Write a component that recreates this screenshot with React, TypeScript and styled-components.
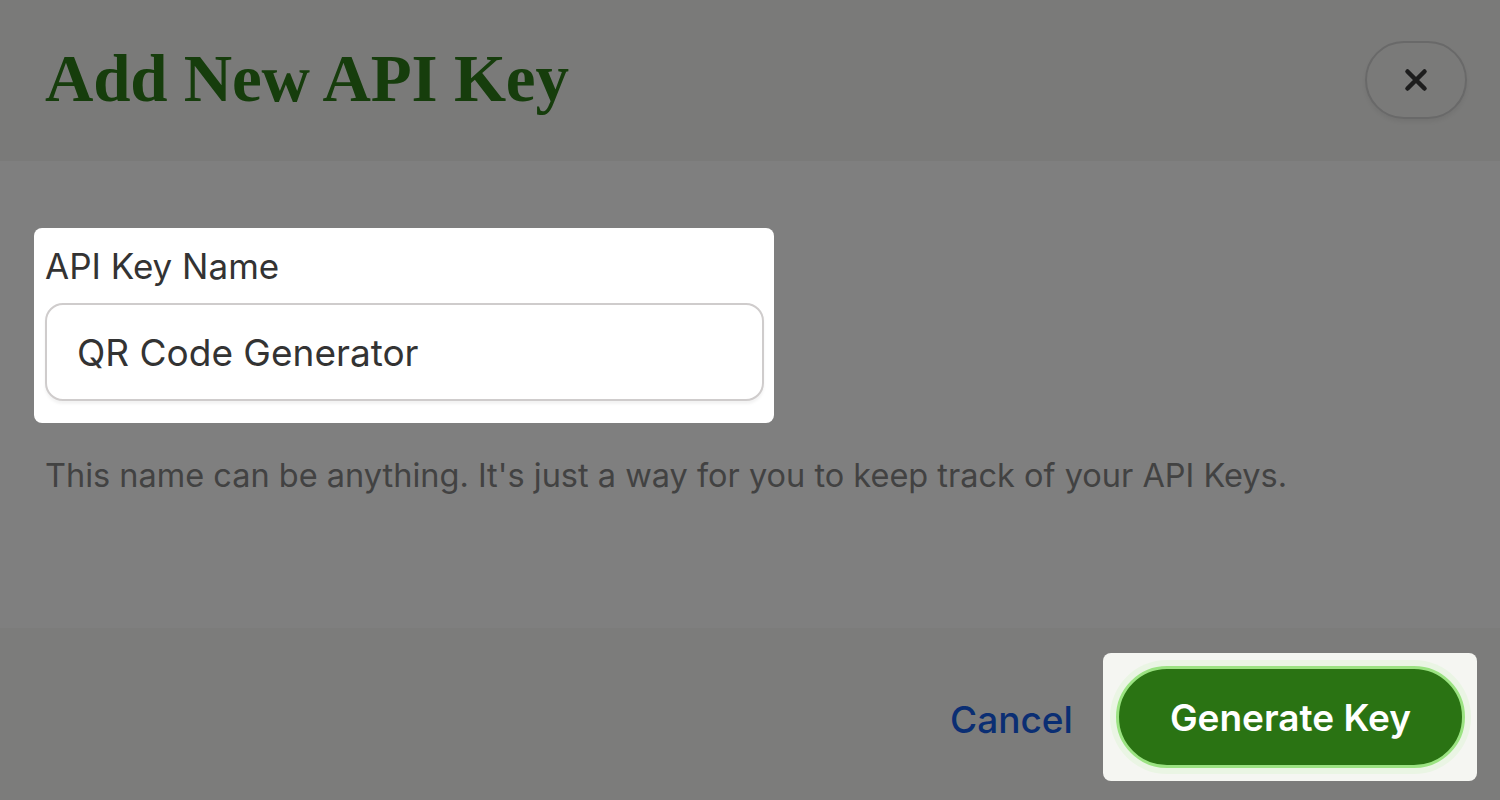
import styled, { createGlobalStyle } from "styled-components";

const GlobalStyle = createGlobalStyle`
  html, body {
    margin: 0;
    padding: 0;
    background: #ffffff;
    font-family: Inter, "Noto Sans", sans-serif;
  }
`;

const Page = styled.div`
  position: relative;
  width: 100vw;
  height: 800px;
  overflow: hidden;
`;

const Modal = styled.div`
  display: flex;
  flex-direction: column;
  height: 100%;
  background: #ffffff;
  border-radius: 12px 12px 0 0;
`;

const Header = styled.header`
  display: flex;
  align-items: center;
  justify-content: space-between;
  height: 161px;
  padding: 0 33px 0 45px;
  background: #f4f4f2;
  box-sizing: border-box;
`;

const Title = styled.h1`
  margin: 0;
  font-family: "Liberation Serif", "DejaVu Serif", serif;
  font-size: 67px;
  font-weight: 700;
  letter-spacing: -0.2px;
  color: #2c7a18;
  line-height: 1;
  transform: translateY(-2px);
`;

const CloseButton = styled.button`
  display: flex;
  align-items: center;
  justify-content: center;
  width: 102px;
  height: 78px;
  margin-top: -2px;
  border: 2px solid #d2d2d2;
  border-radius: 39px;
  background: #f4f4f2;
  box-shadow: 0 3px 4px rgba(0, 0, 0, 0.06);
  cursor: pointer;
  color: #3a3a3a;
`;

const Body = styled.main`
  flex: 1;
  padding: 67px 45px 0;
`;

const Spotlight = styled.div<{ $bg?: string }>`
  position: relative;
  z-index: 2;
  background: ${(p) => p.$bg ?? "#ffffff"};
  border-radius: 8px;
`;

const FieldSpot = styled(Spotlight)`
  width: 719px;
  margin-left: -11px;
  padding: 18px 10px 22px 11px;
`;

const Label = styled.label`
  display: block;
  font-size: 35px;
  font-weight: 400;
  color: #333333;
  line-height: 40px;
  margin-bottom: 17px;
`;

const Input = styled.input`
  display: block;
  box-sizing: border-box;
  width: 100%;
  height: 98px;
  padding: 0 30px;
  border: 2px solid #cfcccc;
  border-radius: 18px;
  font-family: Inter, "Noto Sans", sans-serif;
  font-size: 37px;
  color: #333333;
  background: #ffffff;
  box-shadow: 0 3px 3px rgba(0, 0, 0, 0.05);
  outline: none;
`;

const Help = styled.p`
  margin: 33px 0 0;
  font-size: 32.5px;
  color: #858585;
  line-height: 40px;
`;

const Footer = styled.footer`
  display: flex;
  align-items: center;
  justify-content: flex-end;
  gap: 30px;
  height: 172px;
  padding: 6px 23px 0 0;
  box-sizing: border-box;
  background: #f8f8f6;
`;

const CancelLink = styled.button`
  border: none;
  background: none;
  padding: 0;
  margin-top: 4px;
  font-family: Inter, "Noto Sans", sans-serif;
  font-size: 37px;
  font-weight: 500;
  color: #145ce6;
  cursor: pointer;
`;

const ButtonSpot = styled(Spotlight)`
  padding: 13px 12px 13px 13px;
`;

const PrimaryButton = styled.button`
  height: 102px;
  padding: 0 51px;
  border: 3px solid #9be382;
  border-radius: 51px;
  background: #2a7313;
  box-shadow: 0 0 0 6px #eaf5e4;
  font-family: Inter, "Noto Sans", sans-serif;
  font-size: 37px;
  font-weight: 600;
  color: #ffffff;
  cursor: pointer;
`;

const Overlay = styled.div`
  position: absolute;
  inset: 0;
  z-index: 1;
  background: rgba(0, 0, 0, 0.5);
  pointer-events: none;
`;

export default function App() {
  return (
    <Page>
      <GlobalStyle />
      <Modal>
        <Header>
          <Title>Add New API Key</Title>
          <CloseButton aria-label="Close">
            <svg width="34" height="34" viewBox="0 0 24 24" fill="none" stroke="currentColor" strokeWidth="3.2" strokeLinecap="round">
              <path d="M6 6l12 12M18 6L6 18" />
            </svg>
          </CloseButton>
        </Header>
        <Body>
          <FieldSpot>
            <Label htmlFor="key-name">API Key Name</Label>
            <Input id="key-name" defaultValue="QR Code Generator" />
          </FieldSpot>
          <Help>This name can be anything. It's just a way for you to keep track of your API Keys.</Help>
        </Body>
        <Footer>
          <CancelLink>Cancel</CancelLink>
          <ButtonSpot $bg="#f5f6f2">
            <PrimaryButton>Generate Key</PrimaryButton>
          </ButtonSpot>
        </Footer>
      </Modal>
      <Overlay />
    </Page>
  );
}
